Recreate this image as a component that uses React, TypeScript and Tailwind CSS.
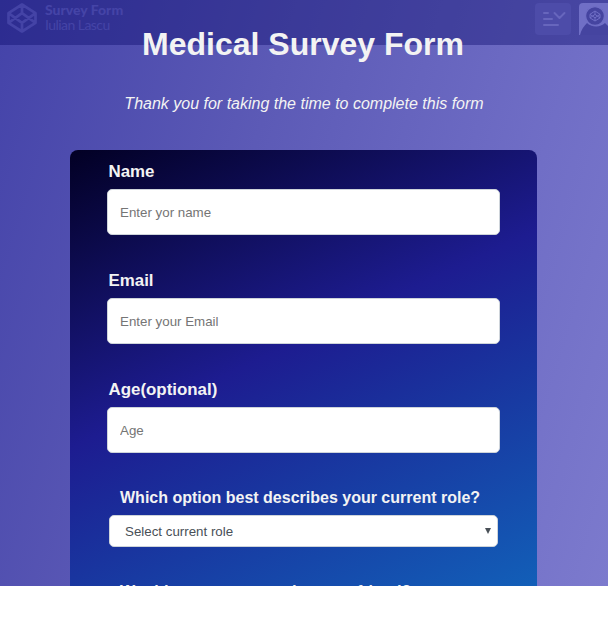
import React from 'react';

const sans = "font-['Liberation_Sans',Arial,sans-serif]";

function CodepenMark({ className, width = 7 }: { className: string; width?: number }) {
  return (
    <svg viewBox="0 0 100 100" className={className} fill="none" stroke="currentColor" strokeWidth={width} strokeLinejoin="round" strokeLinecap="round">
      <path d="M50 5 95 34v32L50 95 5 66V34zM50 5v29M50 66v29M5 34l45 32 45-32M5 66l45-32 45 32" />
    </svg>
  );
}

function EmbedHeader() {
  return (
    <header className="absolute inset-x-0 top-0 flex h-[45px] items-start overflow-hidden bg-[#0a0a6c]/40">
      <CodepenMark className="ml-[7px] mt-[3px] h-[30px] w-[30px] shrink-0 text-[#4443a6]" width={9} />
      <div className="ml-[8px] mt-[2px] font-['Lato',sans-serif] text-[14px] leading-[15px] text-[#4544a7]">
        <div className="font-black">Survey Form</div>
        <div className="tracking-[-0.55px]">Iulian Lascu</div>
      </div>
      <div className="ml-auto mt-[3px] flex shrink-0 gap-2">
        <div className="h-[32px] w-[36px] rounded-[4px] bg-[#4d4ca9]">
          <svg viewBox="0 0 36 32" className="h-8 w-9" fill="none" stroke="#6766bd" strokeWidth="2" strokeLinecap="round" strokeLinejoin="round">
            <path d="M9 10h4M9 16h8M9 22h14M19.500 10l5 5 5-5" />
          </svg>
        </div>
        <svg viewBox="0 0 29 32" className="h-8 w-[29px]">
          <path d="M4 0h25v32H0V4a4 4 0 0 1 4-4z" fill="#706fc6" />
          <path d="M1 32c1-5 4-9 7-12 4 4 13 5 18 0l3 3v9z" fill="#4544a0" />
          <circle cx="16" cy="13" r="9.400" fill="#4544a0" stroke="#706fc6" strokeWidth="1.200" />
          <g fill="none" stroke="#706fc6" strokeWidth="1" strokeLinejoin="round">
            <path d="M16 8l5 3.300v3.600L16 18l-5-3.100v-3.600zM16 8v3.400M16 14.800V18M11 11.300l5 3.500 5-3.500M11 14.900l5-3.500 5 3.500" />
          </g>
        </svg>
      </div>
    </header>
  );
}

function Field({ label, placeholder }: { label: string; placeholder: string }) {
  return (
    <div className="mb-[36px]">
      <label className="block pl-[1.500px] text-[16.900px] font-bold leading-5 text-[#f3f3f3]">{label}</label>
      <input
        placeholder={placeholder}
        className="mt-[7px] block h-[46px] w-full rounded-[5px] border border-[#ced4da] bg-white px-3 text-[13.333px] outline-none placeholder:text-[#757575]"
      />
    </div>
  );
}

export default function App() {
  return (
    <div className={`h-[638px] w-[608px] overflow-hidden bg-white ${sans}`}>
      <main className="relative h-[586px] overflow-hidden bg-[linear-gradient(107deg,#4443a9_0%,#5c5ab6_38%,#706ec6_75%,#7c7acd_100%)]">
        <EmbedHeader />
        <div className="relative text-center text-[#f3f3f3]">
          <h1 className="pt-[24px] pr-[2px] text-[32px] font-bold leading-10">Medical Survey Form</h1>
          <p className="mt-[30px] text-base italic leading-5">Thank you for taking the time to complete this form</p>
        </div>
        <form className="relative ml-[70px] mt-[36px] h-[600px] w-[467px] rounded-[8px] bg-[linear-gradient(155deg,#020024_0px,#1d1c90_270px,#125fb8_593px)] pl-[37px] pr-[37px] pt-[12px]">
          <Field label="Name" placeholder="Enter yor name" />
          <Field label="Email" placeholder="Enter your Email" />
          <Field label="Age(optional)" placeholder="Age" />
          <div className="-mt-px px-[2px]">
            <label className="block pl-[11px] text-[16px] font-bold leading-5 text-[#f3f3f3]">Which option best describes your current role?</label>
            <div className="mt-[7px] flex h-[32px] items-center justify-between rounded-[5px] border border-[#ced4da] bg-white pl-[15px] pr-[6px] text-[13.333px] text-[#495057]">
              <span className="pt-px">Select current role</span>
              <svg viewBox="0 0 6 6" className="mb-px h-[6px] w-[6px]"><path d="M0 0h6L3 6z" fill="#495057" /></svg>
            </div>
            <label className="mt-[35px] block pl-[11px] text-[16px] font-bold leading-5 text-[#f3f3f3]">Would you recommend us to a friend?</label>
          </div>
        </form>
      </main>
    </div>
  );
}
